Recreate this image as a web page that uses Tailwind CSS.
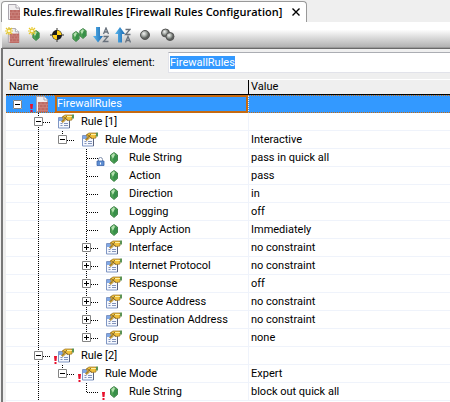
<!DOCTYPE html>
<html lang="en">
<head>
<meta charset="utf-8">
<title>Firewall Rules Configuration</title>
<script src="https://cdn.jsdelivr.net/npm/@tailwindcss/browser@4"></script>
</head>
<body class="flex h-screen flex-col overflow-hidden bg-[#efefef] font-[Roboto,sans-serif] text-[11px] leading-4 text-black">
<svg class="absolute h-0 w-0" aria-hidden="true">
  <defs>
    <linearGradient id="blue" x2="1"><stop stop-color="#5ab8f0"/><stop offset="1" stop-color="#1a68b0"/></linearGradient>
    <radialGradient id="ball" cx=".38" cy=".35"><stop stop-color="#f4f4f4"/><stop offset=".6" stop-color="#a0a5a0"/><stop offset="1" stop-color="#5c5f5c"/></radialGradient>
    <symbol id="file" viewBox="0 0 16 16">
      <path d="M2.500 .5H10l3.500 3.500v11.500h-11z" fill="#f0eef0" stroke="#a9a5ad"/>
      <path d="M10 .5V4h3.500" fill="#fff" stroke="#a9a5ad"/>
      <path d="M4 6h10v10H4z" fill="#bd6a64"/>
      <path d="M4 8.500h10M4 11.500h10M4 14.500h10M7 6v2.500M11 6v2.500M5.500 9v2.500M9 9v2.500M12.500 9v2.500M7 12v2.500M11 12v2.500" stroke="#cc857d" stroke-width=".8"/>
    </symbol>
    <symbol id="star" viewBox="0 0 8 8">
      <path d="M4 0v8M0 4h8M1 1l6 6M7 1L1 7" stroke="#e8c92c" stroke-width="1.200"/>
      <circle cx="4" cy="4" r="1.300" fill="#fffbd0"/>
    </symbol>
    <symbol id="gem" viewBox="0 0 8 12">
      <path d="M4 .5L7.500 3v5.500L4 11.500 .5 8.500V3z" fill="#4fa455" stroke="#2d7338" stroke-width=".8"/>
      <path d="M4 1L1.200 3.500 3 7l2-4z" fill="#b4e0b0"/>
      <path d="M5 3l2 1v4l-3 3-1-4z" fill="#38904a"/>
    </symbol>
    <symbol id="form" viewBox="0 0 16 16">
      <path d="M.5 3.500h11v10.500H.5z" fill="#f5f8fe" stroke="#7f96c4"/>
      <path d="M1 4h4v3H1z" fill="#80a8e6"/>
      <path d="M2.500 9.500h2m1.500 0h4M2.500 11.500h2m1.500 0h4" stroke="#8293bb"/>
      <path d="M11.500 5.500V14" stroke="#59627d"/>
      <path d="M4 3l3-2h7v5l-4 .5-2-1-3 3-1.500-1 2-2.500z" fill="#f0c03a" stroke="#967025" stroke-width=".7"/>
      <path d="M5 2.500l5 4M9 2L4.500 7.500" stroke="#6f572a" stroke-width=".8"/>
      <path d="M9 2.500h5" stroke="#fff0a0"/>
      <path d="M14 .5h2v4h-2z" fill="#5c9354"/>
    </symbol>
    <symbol id="lock" viewBox="0 0 9 9">
      <path d="M2.500 4V2.500a2 2 0 0 1 4 0V4" fill="none" stroke="#8392ae"/>
      <path d="M1 4h7v4.500H1z" fill="#5e8fd4" stroke="#3c65aa" stroke-width=".8"/>
      <path d="M4 5.500h1v2H4z" fill="#fff"/>
    </symbol>
    <symbol id="bang" viewBox="0 0 3 8"><path d="M0 0h3l-.5 5h-2zM.500 6h2v2h-2z" fill="#e8112d"/></symbol>
  </defs>
</svg>

<header class="flex h-[22px] shrink-0 pl-px pt-px">
  <div role="tab" aria-selected="true" class="flex items-center rounded-t-[4px] border border-b-0 border-[#999] bg-white pr-1">
    <svg class="ml-1 h-4 w-4"><use href="#file"/></svg>
    <span class="whitespace-nowrap pl-px font-['Open_Sans',sans-serif] text-[11px] font-semibold">Rules.firewallRules [Firewall Rules Configuration]</span>
    <button aria-label="Close tab" class="ml-2 p-0.5"><svg class="h-2 w-2" viewBox="0 0 8 8"><path d="M.5 .5l7 7M7.500 .5l-7 7" stroke="#000" stroke-width="1.400"/></svg></button>
  </div>
</header>

<main class="ml-px flex grow flex-col">
  <div role="toolbar" aria-label="Rule tools" class="ml-px flex h-[26px] shrink-0 items-center gap-1.5 border-b border-[#999] bg-linear-to-b from-white from-30% to-[#b2b2b2] pl-[3px]">
    <button aria-label="New rule file"><svg class="h-[18px] w-4" viewBox="0 0 16 18"><use href="#file" x="1" y="2" width="15" height="15"/><use href="#star" x="0" y="1" width="8" height="8"/></svg></button>
    <button aria-label="New element"><svg class="h-[18px] w-4" viewBox="0 0 16 18"><use href="#gem" x="5" y="4" width="8" height="11"/><use href="#star" x="1" y="1" width="8" height="8"/></svg></button>
    <button aria-label="Locate"><svg class="h-4 w-4" viewBox="0 0 16 16"><path d="M8 1v14M1 8h14" stroke="#333"/><circle cx="8" cy="8" r="5" fill="#1b1b1b"/><path d="M8 8V3.500A4.500 4.500 0 0 1 12.500 8zM8 8v4.500A4.500 4.500 0 0 1 3.500 8z" fill="#ffd018"/></svg></button>
    <button aria-label="Duplicate element"><svg class="h-4 w-4" viewBox="0 0 16 16"><use href="#gem" x="8" y="1" width="8" height="11"/><use href="#gem" x="1" y="4" width="8" height="11"/></svg></button>
    <button aria-label="Sort ascending"><svg class="h-4 w-4" viewBox="0 0 16 16"><path d="M3 0h4v9h3l-5 6.500L0 9h3z" fill="url(#blue)"/><path d="M10.500 7l2.500-6 2.500 6M11.500 5h3M10.500 9.500h4.500l-4.500 5h5" fill="none" stroke="#68717c" stroke-width="1.300"/></svg></button>
    <button aria-label="Sort descending"><svg class="h-4 w-4" viewBox="0 0 16 16"><path d="M3 15.500h4V7h3L5 0 0 7h3z" fill="url(#blue)"/><path d="M10.500 2.500h4.500l-4.500 5h5M10.500 15.500l2.500-6 2.500 6M11.500 13.500h3" fill="none" stroke="#68717c" stroke-width="1.300"/></svg></button>
    <button aria-label="Single item"><svg class="h-4 w-4" viewBox="0 0 16 16"><circle cx="8" cy="8" r="4.500" fill="url(#ball)" stroke="#555"/></svg></button>
    <button aria-label="All items"><svg class="h-4 w-4" viewBox="0 0 16 16"><circle cx="6.500" cy="6" r="4" fill="url(#ball)" stroke="#555"/><circle cx="11" cy="9.500" r="4" fill="url(#ball)" stroke="#555"/></svg></button>
  </div>

  <div class="flex grow flex-col border-l-2 border-t border-l-[#777] border-t-[#696969] pl-[3px]">
    <div class="flex h-[31px] shrink-0 items-start border-b border-white pt-[3px]">
      <label for="current" class="w-[162px] shrink-0 whitespace-nowrap pl-0.5 pt-[3px]">Current 'firewallrules' element:</label>
      <input id="current" value="FirewallRules" class="h-[21px] min-w-0 grow border border-r-0 border-[#e2e3ea] border-t-[#abadb3] bg-white px-px outline-none selection:bg-[#3399ff] selection:text-white">
    </div>
    <div class="grow bg-white">
      <table role="treegrid" class="w-full table-fixed border-separate border-spacing-0">
        <thead>
          <tr class="h-[15px] text-left">
            <th class="h-[15px] w-[243px] border-b border-r border-black bg-[#efefef] p-0 pl-[3px] font-normal leading-[14px]">Name</th>
            <th class="h-[15px] border-b border-black bg-[#efefef] p-0 pl-0.5 font-normal leading-[14px]">Value</th>
          </tr>
        </thead>
        <tbody id="rows"></tbody>
      </table>
    </div>
  </div>
</main>

<script>
// Guides, one letter per level: i = line through, t = branch, l = last branch, _ = blank.
// State: + collapsed, - expanded.
const rows = [
  ['', '-', 'bang', 'file', 'FirewallRules', ''],
  ['t', '-', '', 'form', 'Rule [1]', ''],
  ['il', '-', '', 'form', 'Rule Mode', 'Interactive'],
  ['i_t', '', 'lock', 'gem', 'Rule String', 'pass in quick all'],
  ['i_t', '', '', 'gem', 'Action', 'pass'],
  ['i_t', '', '', 'gem', 'Direction', 'in'],
  ['i_t', '', '', 'gem', 'Logging', 'off'],
  ['i_t', '', '', 'gem', 'Apply Action', 'Immediately'],
  ['i_t', '+', '', 'form', 'Interface', 'no constraint'],
  ['i_t', '+', '', 'form', 'Internet Protocol', 'no constraint'],
  ['i_t', '+', '', 'form', 'Response', 'off'],
  ['i_t', '+', '', 'form', 'Source Address', 'no constraint'],
  ['i_t', '+', '', 'form', 'Destination Address', 'no constraint'],
  ['i_l', '+', '', 'form', 'Group', 'none'],
  ['t', '-', 'bang', 'form', 'Rule [2]', ''],
  ['il', '-', 'bang', 'form', 'Rule Mode', 'Expert'],
  ['i_l', '', 'bang', 'gem', 'Rule String', 'block out quick all'],
];
const icons = { file: 'h-4 w-4', form: 'h-4 w-4', gem: 'h-3 w-4' };
const marks = {
  bang: '<svg class="h-2 w-[3px] shrink-0" viewBox="0 0 3 8"><use href="#bang"/></svg>',
  lock: '<svg class="h-[9px] w-[9px] shrink-0" viewBox="0 0 9 9"><use href="#lock"/></svg>',
};
const expander = (state) => !state ? '' :
  `<button aria-label="${state === '+' ? 'Expand' : 'Collapse'}" class="col-start-1 row-start-1 ml-[7px] h-[9px] w-[9px] self-center bg-white"><svg class="h-[9px] w-[9px]" viewBox="0 0 9 9"><path d="M.5 .5h8v8h-8z" fill="#fff" stroke="#848484"/><path d="M2 4.500h5${state === '+' ? 'M4.500 2v5' : ''}" stroke="#000"/></svg></button>`;
const guide = (kind, button) => {
  const d = (kind === 'i' || kind === 't' ? 'M11.500 0v18' : kind === 'l' ? 'M11.500 0v9' : '') + (kind === 't' || kind === 'l' ? 'M12 9.500h11' : '');
  return `<span class="grid h-[18px] w-6 shrink-0"><svg class="col-start-1 row-start-1 h-[18px] w-6" viewBox="0 0 24 18"><path d="${d}" stroke="#000" stroke-dasharray="1 1" shape-rendering="crispEdges"/></svg>${button}</span>`;
};
document.getElementById('rows').innerHTML = rows.map(([guides, state, mark, icon, name, value], i) => {
  const selected = i === 0;
  const cell = selected
    ? 'h-[18px] border-y border-dotted border-y-[#c66a10] bg-[#3399ff] p-0 text-white'
    : 'h-[18px] border-b border-[#eff3fb] p-0';
  const button = expander(state);
  const tree = [...guides].map((g, n) => guide(g, n === guides.length - 1 ? button : '')).join('');
  return `<tr aria-level="${guides.length + 1}" aria-selected="${selected}">
    <td class="${cell} border-r border-r-[#eff3fb]"><div class="${selected ? 'h-4' : 'h-[17px]'} flex items-center">
      <span class="grid w-[21px] shrink-0">${guides ? '' : button}</span>${tree}
      <span class="flex w-[7px] shrink-0 items-end justify-end self-stretch pr-px">${marks[mark] || ''}</span>
      <svg class="${icons[icon]} shrink-0"><use href="#${icon}"/></svg>
      <span class="${selected ? '-my-px ml-[5px] flex h-[18px] grow items-center border-2 border-solid border-[#c66a10]' : 'ml-[7px]'} whitespace-nowrap">${name}</span>
    </div></td>
    <td class="${cell} whitespace-nowrap"><div class="${selected ? 'h-4' : 'h-[17px]'} flex items-center pl-0.5">${value}</div></td>
  </tr>`;
}).join('');
const field = document.getElementById('current');
field.focus();
field.select();
</script>
</body>
</html>
